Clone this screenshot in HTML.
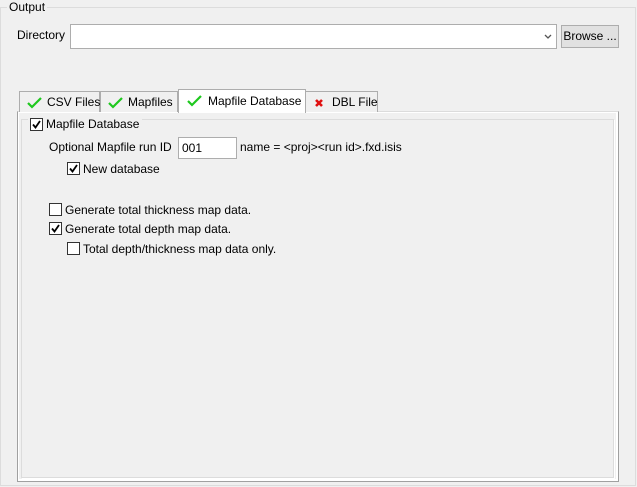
<!DOCTYPE html>
<html><head><style>
*{margin:0;padding:0;box-sizing:border-box}
body{width:637px;height:487px;background:#f0f0f0;font-family:"Liberation Sans",sans-serif;font-size:12px;color:#000;position:relative;overflow:hidden}
.a{position:absolute;white-space:nowrap}
.cb{position:absolute;width:13px;height:13px;border:1px solid #333;background:#fff}
.cb svg{position:absolute;left:1px;top:1px}
.tab{position:absolute;border:1px solid #adadad;border-bottom:none;background:#f0f0f0;height:21px;white-space:nowrap}
.tab span{position:absolute;top:3px;white-space:nowrap}
.tab svg{position:absolute;top:5px;left:7px}
</style></head><body>
<div class="a" style="left:0;top:7px;width:636px;height:479px;border:1px solid #dcdcdc"></div>
<div class="a" style="left:7px;top:0;background:#f0f0f0;padding:0 2px;line-height:14px">Output</div>
<div class="a" style="left:17px;top:28px">Directory</div>
<div class="a" style="left:70px;top:24px;width:487px;height:25px;border:1px solid #adadad;background:#fff">
<svg style="position:absolute;right:4px;top:9px" width="8" height="6"><path d="M1 1 L4 4 L7 1" stroke="#555" stroke-width="1.3" fill="none"/></svg></div>
<div class="a" style="left:561px;top:25px;width:58px;height:23px;border:1px solid #adadad;background:#e1e1e1;text-align:center;line-height:21px">Browse ...</div>
<div class="a" style="left:17px;top:111px;width:602px;height:371px;border:1px solid #a0a0a0;border-top-color:#dcdcdc;background:#f0f0f0;box-shadow:inset 1px 1px 0 #fff,inset -1px -1px 0 #fff,inset -2px -2px 0 #fff"></div>
<div class="a" style="left:21px;top:119px;width:593px;height:359px;border:1px solid #dcdcdc;box-shadow:1px 1px 0 #fff"></div>
<div class="tab" style="left:19px;top:91px;width:81px"><svg width="15" height="12"><path d="M1 6 L5 10 L14 1" stroke="#1ec81e" stroke-width="2.2" fill="none"/></svg><span style="left:27px">CSV Files</span></div>
<div class="tab" style="left:100px;top:91px;width:78px"><svg width="15" height="12"><path d="M1 6 L5 10 L14 1" stroke="#1ec81e" stroke-width="2.2" fill="none"/></svg><span style="left:27px">Mapfiles</span></div>
<div class="tab" style="left:305px;top:91px;width:73px"><svg width="10" height="10" style="top:6px;left:8px"><path d="M2 2 L8 8 M8 2 L2 8" stroke="#e01010" stroke-width="2.6" fill="none"/></svg><span style="left:26px">DBL File</span></div>
<div class="tab" style="left:178px;top:89px;width:128px;height:24px;background:#fff;border-color:#adadad"><svg width="15" height="12" style="top:5px;left:8px"><path d="M1 6 L5 10 L14 1" stroke="#1ec81e" stroke-width="2.2" fill="none"/></svg><span style="left:29px;top:4px">Mapfile Database</span></div>
<div class="a" style="left:28px;top:117px;width:114px;height:14px;background:#f0f0f0"></div>
<div class="cb" style="left:30px;top:118px"><svg width="9" height="9"><path d="M1 4.5 L3.5 7.5 L8 1" stroke="#000" stroke-width="1.8" fill="none"/></svg></div>
<div class="a" style="left:46px;top:117px">Mapfile Database</div>
<div class="a" style="left:49px;top:140px">Optional Mapfile run ID</div>
<div class="a" style="left:178px;top:137px;width:59px;height:22px;border:1px solid #adadad;background:#fff;padding:3px 0 0 3px">001</div>
<div class="a" style="left:240px;top:140px">name = &lt;proj&gt;&lt;run id&gt;.fxd.isis</div>
<div class="cb" style="left:67px;top:162px"><svg width="9" height="9"><path d="M1 4.5 L3.5 7.5 L8 1" stroke="#000" stroke-width="1.8" fill="none"/></svg></div>
<div class="a" style="left:83px;top:162px">New database</div>
<div class="cb" style="left:49px;top:203px"></div>
<div class="a" style="left:65px;top:203px">Generate total thickness map data.</div>
<div class="cb" style="left:49px;top:222px"><svg width="9" height="9"><path d="M1 4.5 L3.5 7.5 L8 1" stroke="#000" stroke-width="1.8" fill="none"/></svg></div>
<div class="a" style="left:65px;top:222px">Generate total depth map data.</div>
<div class="cb" style="left:67px;top:242px"></div>
<div class="a" style="left:83px;top:242px">Total depth/thickness map data only.</div>
</body></html>
